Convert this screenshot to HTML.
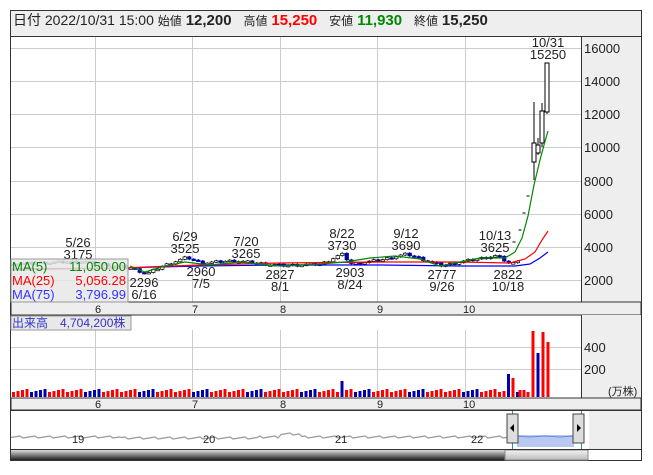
<!DOCTYPE html>
<html><head><meta charset="utf-8"><style>
body{margin:0;background:#fff;width:653px;height:470px;overflow:hidden;font-family:"Liberation Sans","Noto Sans CJK JP",sans-serif}
svg text{font-family:"Liberation Sans","Noto Sans CJK JP",sans-serif}
</style></head><body>
<svg id="s" width="653" height="470" xmlns="http://www.w3.org/2000/svg">
<rect x="10.5" y="10.5" width="631" height="450" fill="#fff" stroke="#333"/>
<rect x="11" y="11" width="630" height="25" fill="#eeeeee"/>
<line x1="10" y1="36.5" x2="641" y2="36.5" stroke="#333"/>
<text x="13" y="25" font-size="14" fill="#222">日付 2022/10/31 15:00 <tspan font-size="12">始値</tspan> <tspan font-weight="bold" font-size="15">12,200</tspan>  <tspan font-size="12" dx="8">高値</tspan> <tspan font-weight="bold" font-size="15" fill="#f00">15,250</tspan> <tspan font-size="12" dx="8">安値</tspan> <tspan font-weight="bold" font-size="15" fill="#080">11,930</tspan> <tspan font-size="12" dx="8">終値</tspan> <tspan font-weight="bold" font-size="15">15,250</tspan></text>
<rect x="581" y="37" width="60" height="265" fill="#eeeeee"/>
<line x1="581.5" y1="37" x2="581.5" y2="302" stroke="#333"/>
<g id="grid" stroke="#ccc" stroke-width="1"></g>
<g font-size="13" fill="#222">
<text x="584" y="53">16000</text><text x="584" y="86">14000</text><text x="584" y="119">12000</text><text x="584" y="152">10000</text>
<text x="584" y="186">8000</text><text x="584" y="219">6000</text><text x="584" y="252">4000</text><text x="584" y="285">2000</text>
</g>
<rect x="11" y="302" width="630" height="13" fill="#eeeeee" stroke="#333"/>
<g font-size="11" fill="#222"><text x="95" y="313">6</text><text x="192" y="313">7</text><text x="280" y="313">8</text><text x="377" y="313">9</text><text x="463" y="313">10</text></g>
<rect x="581" y="315" width="60" height="83" fill="#eeeeee"/>
<line x1="581.5" y1="315" x2="581.5" y2="398" stroke="#333"/>
<g font-size="13" fill="#222"><text x="584" y="352">400</text><text x="584" y="374">200</text><text x="608" y="395" font-size="11">(万株)</text></g>
<rect x="11" y="398" width="630" height="12" fill="#eeeeee" stroke="#333"/>
<g font-size="11" fill="#222"><text x="95" y="408">6</text><text x="192" y="408">7</text><text x="280" y="408">8</text><text x="377" y="408">9</text><text x="463" y="408">10</text></g>
<rect x="589" y="410" width="52" height="40" fill="#eeeeee"/>
<polyline id="nav" fill="none" stroke="#999" stroke-width="1.2"/>
<rect x="517" y="435" width="57" height="12" fill="#b8c8f0"/>
<polyline points="517,436 530,437 545,436 560,437 574,436" fill="none" stroke="#6688dd"/>
<line x1="512.5" y1="410" x2="512.5" y2="450" stroke="#29b"/><line x1="581.5" y1="410" x2="581.5" y2="450" stroke="#29b"/>
<g font-size="11" fill="#222"><text x="72" y="443">19</text><text x="203" y="443">20</text><text x="335" y="443">21</text><text x="471" y="443">22</text></g>
<rect x="507" y="414" width="11" height="29" fill="#ddd" stroke="#444"/><path d="M514 424 l-4 4 4 4z" fill="#000"/>
<rect x="573" y="414" width="11" height="29" fill="#ddd" stroke="#444"/><path d="M577 424 l4 4 -4 4z" fill="#000"/>
<defs><linearGradient id="g1" x1="0" y1="0" x2="0" y2="1"><stop offset="0" stop-color="#ddd"/><stop offset="1" stop-color="#222"/></linearGradient>
<linearGradient id="g2" x1="0" y1="0" x2="0" y2="1"><stop offset="0" stop-color="#f4f4f4"/><stop offset="1" stop-color="#bbb"/></linearGradient></defs>
<rect x="11" y="450" width="494" height="10" fill="url(#g1)"/>
<rect x="505" y="450" width="83" height="10" fill="url(#g2)" stroke="#888"/>
<line x1="10" y1="410.5" x2="641" y2="410.5" stroke="#333"/>
<line x1="10" y1="449.5" x2="641" y2="449.5" stroke="#333"/>
<g id="cd"></g>
<g id="vol"></g>
<polyline fill="none" stroke="#00f" stroke-width="1.2" points="12,269 120,268 200,266 280,265 380,265 460,266 515,266 530,264 540,258 548,252"/>
<polyline fill="none" stroke="#f00" stroke-width="1.2" points="12,270 120,268 200,265 280,263 380,262 460,262 510,263 525,259 535,252 542,240 548,231"/>
<polyline fill="none" stroke="#080" stroke-width="1.2" points="130,266 145,272 165,266 185,262 210,265 240,262 280,266 320,264 345,262 370,258 395,256 420,259 440,266 460,262 480,258 505,258 515,252 522,238 528,216 534,185 540,160 544,145 548,131"/>
<g font-size="13" fill="#222" text-anchor="middle">
<text x="78" y="247">5/26</text><text x="78" y="259">3175</text>
<text x="185" y="241">6/29</text><text x="185" y="253">3525</text>
<text x="246" y="246">7/20</text><text x="246" y="258">3265</text>
<text x="342" y="238">8/22</text><text x="342" y="250">3730</text>
<text x="406" y="238">9/12</text><text x="406" y="250">3690</text>
<text x="495" y="240">10/13</text><text x="495" y="252">3625</text>
<text x="548" y="47">10/31</text><text x="548" y="59">15250</text>
<text x="144" y="287">2296</text><text x="144" y="299">6/16</text>
<text x="201" y="276">2960</text><text x="201" y="288">7/5</text>
<text x="280" y="279">2827</text><text x="280" y="291">8/1</text>
<text x="350" y="277">2903</text><text x="350" y="289">8/24</text>
<text x="442" y="279">2777</text><text x="442" y="291">9/26</text>
<text x="508" y="279">2822</text><text x="508" y="291">10/18</text>
</g>
<rect x="11" y="259" width="117" height="43" fill="#e8e8e8" fill-opacity="0.85" stroke="#999"/>
<g font-size="13"><text x="12" y="271" fill="#080">MA(5)</text><text x="126" y="271" fill="#080" text-anchor="end">11,050.00</text>
<text x="12" y="285" fill="#f00">MA(25)</text><text x="126" y="285" fill="#f00" text-anchor="end">5,056.28</text>
<text x="12" y="299" fill="#33f">MA(75)</text><text x="126" y="299" fill="#33f" text-anchor="end">3,796.99</text></g>
<rect x="11" y="316" width="120" height="14" fill="#e8e8e8" stroke="#999"/>
<text x="12" y="327" font-size="12" fill="#33c">出来高　4,704,200株</text>
</svg>
<script>
var NS="http://www.w3.org/2000/svg",s=document.getElementById('s');
function el(t,a,p){var e=document.createElementNS(NS,t);for(var k in a)e.setAttribute(k,a[k]);(p||s).appendChild(e);return e;}
var g=document.getElementById('grid');
[95,192,280,377,465].forEach(function(x){el('line',{x1:x+.5,y1:37,x2:x+.5,y2:302},g);el('line',{x1:x+.5,y1:330,x2:x+.5,y2:398},g);});
[48,81,114,147,181,214,247,280].forEach(function(y){el('line',{x1:11,y1:y+.5,x2:581,y2:y+.5},g);});
[347,369].forEach(function(y){el('line',{x1:11,y1:y+.5,x2:581,y2:y+.5},g);});
function Y(p){return 48+(16000-p)*0.01655;}
var kp=[[12,2950],[80,3100],[130,2700],[145,2350],[160,2800],[185,3350],[200,3000],[232,3150],[280,2850],[320,2950],[340,3550],[350,2950],[380,3200],[405,3550],[440,2850],[470,3200],[495,3450],[510,2900],[518,3300]];
function P(x){for(var i=1;i<kp.length;i++)if(x<=kp[i][0]){var a=kp[i-1],b=kp[i];return a[1]+(b[1]-a[1])*(x-a[0])/(b[0]-a[0]);}return 3300;}
var cd=document.getElementById('cd'),vg=document.getElementById('vol'),prev=2950,i=0;
for(var x=12;x<=518;x+=4.5,i++){var c=P(x)+((i*37)%7-3)*25,o=prev,hi=Math.max(o,c)+60,lo=Math.min(o,c)-60;
 var up=c>=o;el('line',{x1:x+1.75,y1:Y(hi),x2:x+1.75,y2:Y(lo),stroke:'#000'},cd);
 var y1=Y(Math.max(o,c)),h=Math.max(1.5,Y(Math.min(o,c))-y1);
 el('rect',{x:x,y:y1,width:3.5,height:h,fill:up?'#fff':'#00a',stroke:up?'#000':'#00a','stroke-width':.7},cd);prev=c;
 if(x>=520)continue;var vh=5+((i*53)%4);if(Math.abs(x-340)<3)vh=16;if(Math.abs(x-507)<3)vh=23;if(Math.abs(x-512)<3)vh=19;
 el('rect',{x:x,y:397-vh,width:3,height:vh,fill:(Math.floor(i/4)%3==1||Math.abs(x-340)<3||Math.abs(x-507)<3)?'#00a':'#f00'},vg);}
[[528,196],[524,213],[520,230],[514,242]].forEach(function(d){el('line',{x1:d[0]-1.5,y1:d[1],x2:d[0]+1.5,y2:d[1],stroke:'#000'},cd);});
[[534,102,180,143,162,'#fff'],[538,138,155,145,153,'#fff'],[542,103,147,111,143,'#fff'],[547,63,114,63,112,'#fff']].forEach(function(c){
 el('line',{x1:c[0],y1:c[1],x2:c[0],y2:c[2],stroke:'#000'},cd);el('rect',{x:c[0]-2,y:c[3],width:4,height:c[4]-c[3],fill:c[5],stroke:'#000'},cd);});
[[520,390,'#f00'],[524,390,'#f00'],[528,392,'#f00'],[533,331,'#f00'],[538,353,'#00a'],[543,332,'#f00'],[548,342,'#f00']].forEach(function(v){el('rect',{x:v[0]-1.5,y:v[1],width:3,height:397-v[1],fill:v[2]},vg);});
var pts=[];for(var x=11;x<=512;x+=3){var y=437+((x*13)%5-2)*0.5;if(x>280&&x<300)y-=3;if(x>120&&x<260)y+=1;pts.push(x+','+y);}
document.getElementById('nav').setAttribute('points',pts.join(' '));
</script>
</body></html>
